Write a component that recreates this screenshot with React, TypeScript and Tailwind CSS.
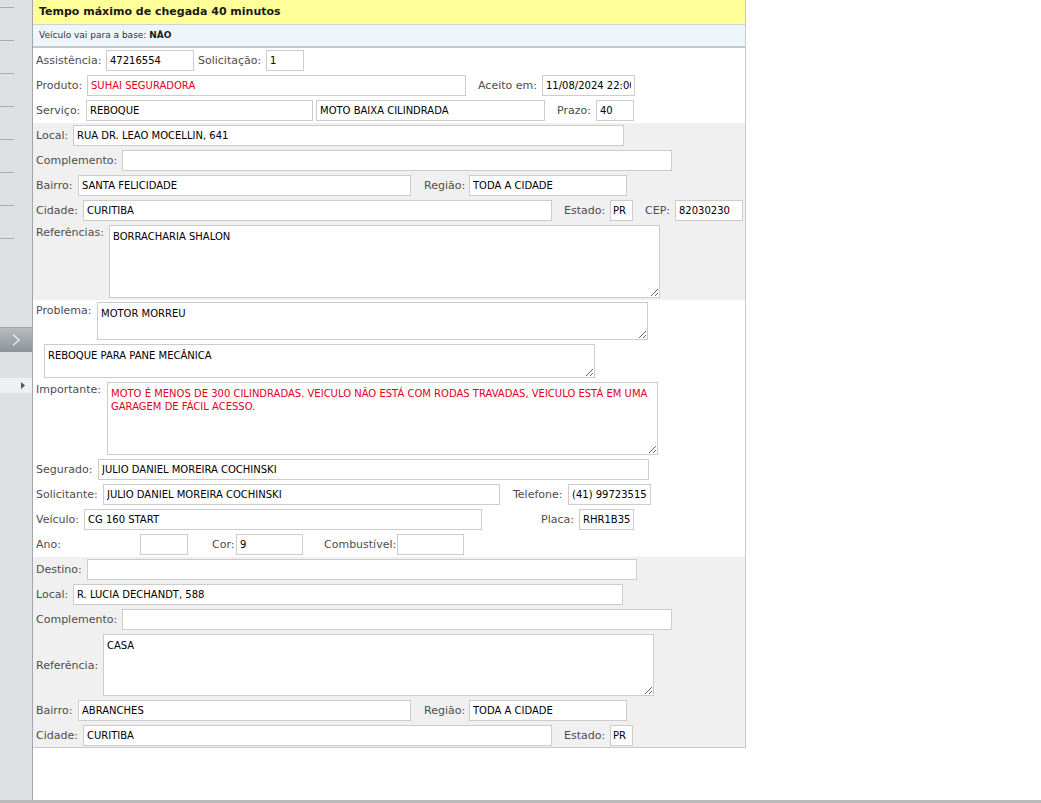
import React from "react";

const LBL = "shrink-0 text-[11px] leading-[13px] text-[#4d4d4d] whitespace-nowrap";
const INP =
  "shrink-0 h-[21px] border border-[#cccccc] bg-white px-[3px] text-[10px] text-black outline-none font-['DejaVu_Sans',sans-serif]";
const TXA =
  "shrink-0 border border-[#cccccc] bg-white px-[3px] pt-[4px] text-[10px] leading-[13px] text-black outline-none font-['DejaVu_Sans',sans-serif]";

function L({ c, children }: { c: string; children: React.ReactNode }) {
  return <span className={`${LBL} ${c}`}>{children}</span>;
}

function I({ c, v = "" }: { c: string; v?: string }) {
  return <input readOnly defaultValue={v} className={`${INP} ${c}`} />;
}

function T({ c, v = "" }: { c: string; v?: string }) {
  return <textarea readOnly defaultValue={v} className={`${TXA} ${c}`} />;
}

function Row({ children }: { children: React.ReactNode }) {
  return <div className="flex items-center h-[21px]">{children}</div>;
}

export default function App() {
  return (
    <div className="h-[803px] w-full flex flex-col bg-white font-['DejaVu_Sans',sans-serif] overflow-hidden">
      <div className="flex flex-1 min-h-0">
        <aside className="w-[33px] shrink-0 bg-[#dee1e4] border-r border-[#a3a7ab] flex flex-col">
          <div className="pt-[7px] flex flex-col">
            {[0, 1, 2, 3, 4, 5, 6, 7].map((i) => (
              <div key={i} className="h-[33px]">
                <div className="w-[14px] h-px bg-[#a9adb1]" />
              </div>
            ))}
          </div>
          <div className="mt-[56px] h-[25px] w-full bg-gradient-to-b from-[#b7bbbf] to-[#8e9398] border-t border-[#9ea2a6] flex items-center justify-center">
            <svg width="12" height="14" viewBox="0 0 12 14">
              <path d="M3 1.5 L9 7 L3 12.5" fill="none" stroke="#e4e7ea" strokeWidth="1.6" />
            </svg>
          </div>
          <div className="mt-[26px] h-[15px] w-full bg-[#eef0f2] flex items-center justify-end pr-[7px]">
            <svg width="4" height="7" viewBox="0 0 4 7">
              <path d="M0 0 L4 3.5 L0 7 Z" fill="#555555" />
            </svg>
          </div>
        </aside>

        <main className="flex-1">
          <div className="w-[713px] border-r border-b border-[#c8c8c8]">
            <div className="h-[25px] bg-[#ffff99] border-b border-[#d2d2d2] flex items-center pl-[6px]">
              <span className="text-[11px] font-bold text-[#1a1a1a]">
                Tempo máximo de chegada 40 minutos
              </span>
            </div>
            <div className="h-[23px] bg-[#eef6fd] border-b-2 border-[#c8c8c8] flex items-center pl-[6px]">
              <span className="text-[9px] text-[#333333]">
                Veículo vai para a base: <b className="text-[#1a1a1a]">NÃO</b>
              </span>
            </div>

            {/* section 1 */}
            <div className="flex flex-col gap-[4px] pl-[3px] pt-[2px] pb-[2px]">
              <Row>
                <L c="w-[70px]">Assistência:</L>
                <I c="w-[88px]" v="47216554" />
                <L c="ml-[4px] w-[68px]">Solicitação:</L>
                <I c="w-[38px]" v="1" />
              </Row>
              <Row>
                <L c="w-[51px]">Produto:</L>
                <I c="w-[379px] !text-[#e3001b]" v="SUHAI SEGURADORA" />
                <L c="ml-[12px] w-[64px]">Aceito em:</L>
                <I c="w-[93px]" v="11/08/2024 22:00" />
              </Row>
              <Row>
                <L c="w-[50px]">Serviço:</L>
                <I c="w-[227px]" v="REBOQUE" />
                <I c="ml-[3px] w-[229px]" v="MOTO BAIXA CILINDRADA" />
                <L c="ml-[12px] w-[39px]">Prazo:</L>
                <I c="w-[38px]" v="40" />
              </Row>
            </div>

            {/* section 2 gray */}
            <div className="flex flex-col gap-[4px] pl-[3px] pt-[2px] pb-[2px] bg-[#f0f0f0]">
              <Row>
                <L c="w-[37px]">Local:</L>
                <I c="w-[551px]" v="RUA DR. LEAO MOCELLIN, 641" />
              </Row>
              <Row>
                <L c="w-[86px]">Complemento:</L>
                <I c="w-[550px]" />
              </Row>
              <Row>
                <L c="w-[42px]">Bairro:</L>
                <I c="w-[333px]" v="SANTA FELICIDADE" />
                <L c="ml-[13px] w-[45px]">Região:</L>
                <I c="w-[158px]" v="TODA A CIDADE" />
              </Row>
              <Row>
                <L c="w-[47px]">Cidade:</L>
                <I c="w-[469px]" v="CURITIBA" />
                <L c="ml-[12px] w-[46px]">Estado:</L>
                <I c="w-[23px] !px-[2px]" v="PR" />
                <L c="ml-[12px] w-[30px]">CEP:</L>
                <I c="w-[68px]" v="82030230" />
              </Row>
              <div className="flex items-start">
                <L c="w-[73px] mt-[1px]">Referências:</L>
                <T c="w-[551px] h-[73px]" v="BORRACHARIA SHALON" />
              </div>
            </div>

            {/* section 3 white */}
            <div className="flex flex-col gap-[4px] pl-[3px] pt-[2px] pb-[2px]">
              <div className="flex items-start">
                <L c="w-[61px] mt-[2px]">Problema:</L>
                <T c="w-[551px] h-[38px]" v="MOTOR MORREU" />
              </div>
              <div className="flex items-start">
                <T c="ml-[8px] w-[551px] h-[34px]" v="REBOQUE PARA PANE MECÂNICA" />
              </div>
              <div className="flex items-start">
                <L c="w-[71px] mt-[1px]">Importante:</L>
                <T
                  c="w-[551px] h-[73px] !text-[#e3001b]"
                  v="MOTO É MENOS DE 300 CILINDRADAS. VEICULO NÃO ESTÁ COM RODAS TRAVADAS, VEICULO ESTÁ EM UMA GARAGEM DE FÁCIL ACESSO."
                />
              </div>
              <Row>
                <L c="w-[62px]">Segurado:</L>
                <I c="w-[551px]" v="JULIO DANIEL MOREIRA COCHINSKI" />
              </Row>
              <Row>
                <L c="w-[67px]">Solicitante:</L>
                <I c="w-[397px]" v="JULIO DANIEL MOREIRA COCHINSKI" />
                <L c="ml-[13px] w-[55px]">Telefone:</L>
                <I c="w-[83px]" v="(41) 997235154" />
              </Row>
              <Row>
                <L c="w-[48px]">Veículo:</L>
                <I c="w-[398px]" v="CG 160 START" />
                <L c="ml-[59px] w-[38px]">Placa:</L>
                <I c="w-[55px]" v="RHR1B35" />
              </Row>
              <Row>
                <L c="w-[104px]">Ano:</L>
                <I c="w-[48px]" />
                <L c="ml-[24px] w-[24px]">Cor:</L>
                <I c="w-[67px]" v="9" />
                <L c="ml-[21px] w-[73px]">Combustível:</L>
                <I c="w-[67px]" />
              </Row>
            </div>

            {/* section 4 gray */}
            <div className="flex flex-col gap-[4px] pl-[3px] pt-[2px] pb-[1px] bg-[#f0f0f0]">
              <Row>
                <L c="w-[51px]">Destino:</L>
                <I c="w-[550px]" />
              </Row>
              <Row>
                <L c="w-[37px]">Local:</L>
                <I c="w-[550px]" v="R. LUCIA DECHANDT, 588" />
              </Row>
              <Row>
                <L c="w-[86px]">Complemento:</L>
                <I c="w-[550px]" />
              </Row>
              <div className="flex items-center">
                <L c="w-[67px]">Referência:</L>
                <T c="w-[551px] h-[62px]" v="CASA" />
              </div>
              <Row>
                <L c="w-[42px]">Bairro:</L>
                <I c="w-[333px]" v="ABRANCHES" />
                <L c="ml-[13px] w-[45px]">Região:</L>
                <I c="w-[158px]" v="TODA A CIDADE" />
              </Row>
              <Row>
                <L c="w-[47px]">Cidade:</L>
                <I c="w-[469px]" v="CURITIBA" />
                <L c="ml-[12px] w-[46px]">Estado:</L>
                <I c="w-[23px] !px-[2px]" v="PR" />
              </Row>
            </div>
          </div>
        </main>
      </div>
      <div className="h-[3px] shrink-0 bg-[#b9b9b9]" />
    </div>
  );
}
